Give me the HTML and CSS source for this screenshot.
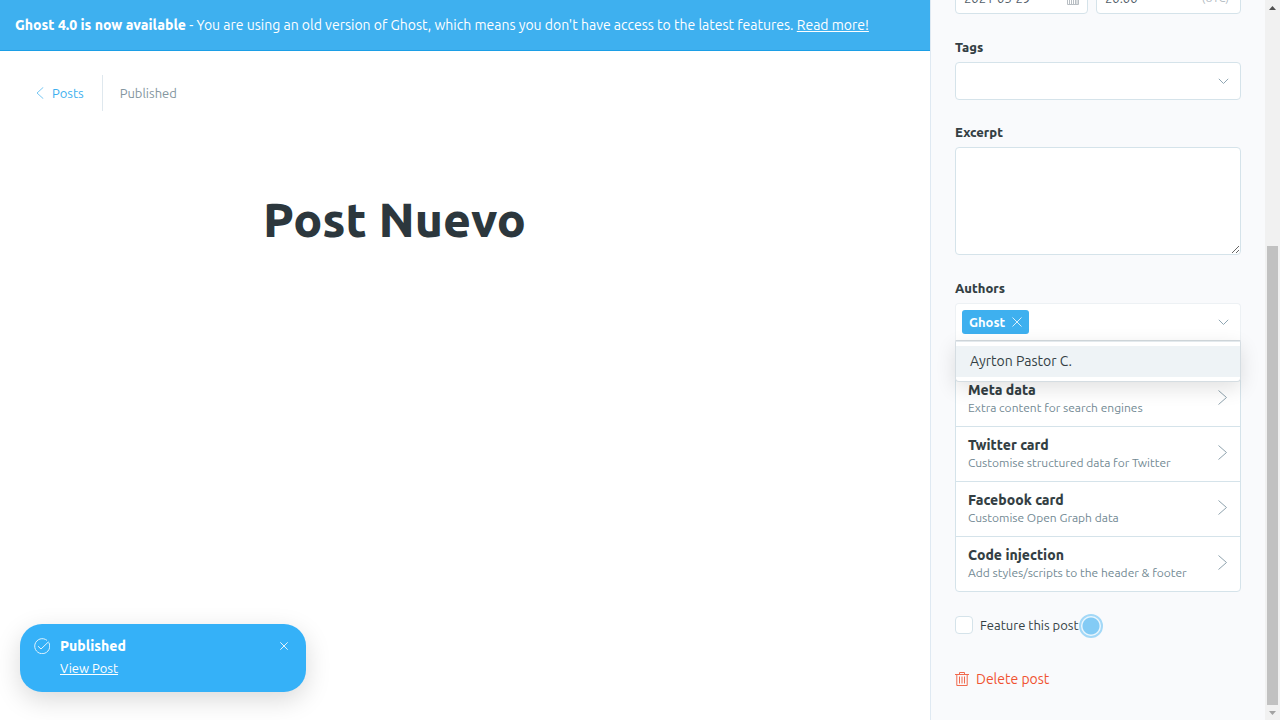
FILE: index.html
```html
<!DOCTYPE html>
<html lang="en">
<head>
<meta charset="utf-8">
<meta name="viewport" content="width=device-width, initial-scale=1">
<title>Post Nuevo - Ghost</title>
<link rel="stylesheet" href="styles.css">
</head>
<body>
<div class="app">
  <main class="editor">
    <aside class="banner"><p><strong>Ghost 4.0 is now available</strong> - You are using an old version of Ghost, which means you don't have access to the latest features. <a href="#">Read more!</a></p></aside>
    <header class="editor-header">
      <a class="back" href="#">
        <svg width="8" height="12" viewBox="0 0 8 12" aria-hidden="true"><path d="M7.3.3 1 6l6.3 5.7"/></svg>
        Posts
      </a>
      <span class="status">Published</span>
    </header>
    <h1 class="post-title">Post Nuevo</h1>

    <section class="toast" role="status">
      <svg class="toast-check" width="16" height="16" viewBox="0 0 16 16" aria-hidden="true"><path d="M14.7 4.4A7.5 7.5 0 1 1 13 2.4"/><path d="M4 8.2 7 11l7.5-7.2"/></svg>
      <div class="toast-body">
        <strong>Published</strong>
        <a href="#">View Post</a>
      </div>
      <button class="toast-close" type="button" aria-label="Close"><svg width="8" height="8" viewBox="0 0 8 8" aria-hidden="true"><path d="M.3.3 7.7 7.7M7.7.3.3 7.7"/></svg></button>
    </section>
  </main>

  <aside class="settings">
    <form class="settings-content">
      <div class="date-row">
        <div class="date-field">
          <input type="text" value="2021-03-29" aria-label="Publish date">
          <svg width="12" height="13" viewBox="0 0 12 13" aria-hidden="true"><path d="M.5 2.5h11v10H.5zM.5 5.5h11M2.5 5.5v7M4.5 5.5v7M6.5 5.5v7M8.5 5.5v7M10 5.5v7M3.5 0v3M8.5 0v3"/></svg>
        </div>
        <div class="time-field">
          <input type="text" value="20:00" aria-label="Publish time">
          <small>(UTC)</small>
        </div>
      </div>

      <div class="field tags">
        <label for="tags">Tags</label>
        <div class="select-box">
          <select id="tags"><option></option></select>
          <svg class="chevron" width="11" height="7" viewBox="0 0 11 7" aria-hidden="true"><path d="M.8.8 5.5 5.5 10.2.8"/></svg>
        </div>
      </div>

      <div class="field">
        <label for="excerpt">Excerpt</label>
        <textarea id="excerpt"></textarea>
      </div>

      <div class="field authors">
        <label for="authors">Authors</label>
        <div class="token-box">
          <span class="token">Ghost <button type="button" aria-label="Remove Ghost"><svg width="10" height="10" viewBox="0 0 10 10" aria-hidden="true"><path d="M.5.5l9 9M9.5.5l-9 9"/></svg></button></span>
          <input id="authors" type="text" role="combobox" aria-expanded="true" aria-controls="author-options">
          <svg class="chevron" width="11" height="7" viewBox="0 0 11 7" aria-hidden="true"><path d="M.8.8 5.5 5.5 10.2.8"/></svg>
        </div>
        <ul class="options" id="author-options" role="listbox">
          <li role="option" aria-selected="true">Ayrton Pastor C.</li>
        </ul>
      </div>

      <nav class="nav-list">
        <button type="button"><span><b>Meta data</b><small>Extra content for search engines</small></span><svg width="9" height="15" viewBox="0 0 9 15" aria-hidden="true"><path d="M.5.5l8 7-8 7"/></svg></button>
        <button type="button"><span><b>Twitter card</b><small>Customise structured data for Twitter</small></span><svg width="9" height="15" viewBox="0 0 9 15" aria-hidden="true"><path d="M.5.5l8 7-8 7"/></svg></button>
        <button type="button"><span><b>Facebook card</b><small>Customise Open Graph data</small></span><svg width="9" height="15" viewBox="0 0 9 15" aria-hidden="true"><path d="M.5.5l8 7-8 7"/></svg></button>
        <button type="button"><span><b>Code injection</b><small>Add styles/scripts to the header &amp; footer</small></span><svg width="9" height="15" viewBox="0 0 9 15" aria-hidden="true"><path d="M.5.5l8 7-8 7"/></svg></button>
      </nav>

      <div class="feature">
        <input id="featured" type="checkbox">
        <label for="featured">Feature this post</label>
        <span class="pulse"></span>
      </div>

      <button class="delete" type="button">
        <svg width="14" height="14" viewBox="0 0 14 14" aria-hidden="true"><path d="M0 2.5h14M4.5 2V.5h5V2M1.8 2.5v11h10.4v-11M4.5 4.5v7M7 4.5v7M9.5 4.5v7"/></svg>
        Delete post
      </button>
    </form>
    <div class="scrollbar" aria-hidden="true">
      <svg width="7" height="4" viewBox="0 0 7 4"><path class="up" d="M0 4 3.5 0 7 4z"/></svg>
      <div class="track"><div class="thumb"></div></div>
      <svg width="7" height="4" viewBox="0 0 7 4"><path class="down" d="M0 0h7L3.5 4z"/></svg>
    </div>
  </aside>
</div>
</body>
</html>
```
FILE: styles.css
```css
* { box-sizing: border-box; }

body {
  margin: 0;
  font-family: Ubuntu, "Noto Sans", "Open Sans", sans-serif;
  font-size: 14px;
  color: #343f44;
  background: #fff;
}

button, input, select, textarea { font: inherit; color: inherit; }
button { border: 0; padding: 0; background: none; cursor: pointer; }
svg { display: block; flex: none; fill: none; stroke: currentColor; }
strong, b { font-weight: 800; }

.app { display: flex; height: 100vh; overflow: hidden; }

/* Editor */
.editor { position: relative; flex: 1; min-width: 0; }

.banner {
  padding: 14px 15px;
  background: #3eb0ef;
  border-bottom: 1px solid #1c9fe6;
  color: #fff;
  line-height: 22px;
}
.banner p { margin: 0; white-space: nowrap; }
.banner a { color: inherit; }

.editor-header {
  display: flex;
  align-items: center;
  padding: 24px 36px;
  font-size: 13px;
  line-height: 36px;
}
.back {
  display: flex;
  align-items: center;
  gap: 8px;
  padding-right: 18px;
  border-right: 1px solid #dfe8ee;
  color: #3eb0ef;
  text-decoration: none;
}
.back svg { opacity: .7; }
.status { padding-left: 17px; color: #8496a0; }

.post-title {
  margin: 52px auto 0;
  padding: 0 15px;
  width: 80%;
  max-width: 434px;
  font-size: 48px;
  font-weight: 800;
  line-height: 64px;
  color: #2c373d;
  white-space: nowrap;
}

/* Notification */
.toast {
  position: absolute;
  left: 20px;
  bottom: 28px;
  display: flex;
  align-items: flex-start;
  width: 286px;
  padding: 12px 18px 12px 14px;
  border-radius: 22px;
  background: #35b1f8;
  color: #fff;
  box-shadow: 0 8px 26px rgba(0, 0, 0, .15);
}
.toast-check { margin: 2px 10px 0 0; }
.toast-check, .toast-close svg { opacity: .85; }
.toast-body { display: grid; flex: 1; gap: 2px; justify-items: start; line-height: 20px; padding-bottom: 2px; }
.toast-body a { color: inherit; font-size: 13px; line-height: 20px; }
.toast-close { padding: 6px 0; }

/* Settings panel */
.settings {
  display: flex;
  width: 350px;
  background: #f9fafc;
  border-left: 1px solid #dfe9f2;
}
.settings-content {
  display: flex;
  flex: 1;
  flex-direction: column;
  justify-content: flex-end;
  min-width: 0;
  padding: 0 24px 31px;
}
.settings-content > * { flex: none; }

.date-row {
  display: grid;
  grid-template-columns: 133fr 145fr;
  gap: 8px;
  margin-bottom: 23px;
  font-size: 13px;
  color: #53606a;
}
.date-field, .time-field {
  display: flex;
  align-items: center;
  height: 32px;
  padding: 0 8px;
  border: 1px solid #d5e3ea;
  border-radius: 4px;
  background: #fff;
}
.time-field { padding-right: 11px; }
.date-row input { flex: 1; width: 0; min-width: 0; padding: 0; border: 0; background: none; outline: 0; }
.date-row svg { color: #b8bec3; }
.date-row small { font-size: 11px; color: #aeb7be; }

.field { display: grid; margin-bottom: 23px; }
.field label { margin-bottom: 5px; font-size: 13px; font-weight: 800; line-height: 20px; }
.tags { margin-bottom: 22px; }
.chevron { color: #8fa6b3; }
.select-box { display: grid; align-items: center; }
.select-box > * { grid-area: 1 / 1; }
.select-box .chevron { justify-self: end; margin-right: 12px; pointer-events: none; }
select, textarea {
  width: 100%;
  border: 1px solid #d5e3ea;
  border-radius: 4px;
  background: #fff;
  outline: 0;
}
select { height: 38px; appearance: none; }
textarea { height: 108px; resize: vertical; }

.authors { position: relative; margin-bottom: 30px; }
.token-box {
  display: flex;
  align-items: center;
  height: 38px;
  padding: 0 11px 0 6px;
  border: 1px solid #edf1f4;
  border-bottom-color: #d3dadf;
  border-radius: 4px 4px 0 0;
  background: #fff;
}
.token {
  display: flex;
  align-items: center;
  gap: 7px;
  height: 24px;
  padding: 0 7px;
  border-radius: 3px;
  background: #3eb0ef;
  color: #fff;
  font-size: 13px;
  font-weight: 600;
}
.token svg { opacity: .8; }
.token-box input { flex: 1; min-width: 0; border: 0; background: none; outline: 0; }
.options {
  position: absolute;
  z-index: 1;
  top: 100%;
  left: 0;
  right: 0;
  margin: 0;
  padding: 4px 0;
  list-style: none;
  border: 1px solid #d5dde2;
  border-top-color: #e3e9ed;
  border-radius: 0 0 4px 4px;
  background: #fff;
  box-shadow: 0 6px 20px rgba(0, 0, 0, .12);
}
.options li { padding: 0 14px; line-height: 31px; background: #eef3f6; }

.nav-list { border: 1px solid #d5e3ea; border-radius: 4px; background: #fff; margin-bottom: 23px; }
.nav-list button {
  display: flex;
  align-items: flex-start;
  justify-content: space-between;
  width: 100%;
  padding: 9px 13px 10px 12px;
  text-align: left;
}
.nav-list button + button { border-top: 1px solid #d5e3ea; }
.nav-list span { display: grid; }
.nav-list b { line-height: 19px; }
.nav-list small { font-size: 12px; line-height: 16px; color: #738a94; white-space: nowrap; }
.nav-list svg { margin-top: 9px; color: #8ea2ad; }

.feature {
  display: flex;
  align-items: center;
  align-self: flex-start;
  position: relative;
  gap: 7px;
  height: 20px;
  margin-bottom: 34px;
  font-size: 13px;
}
.feature input {
  appearance: none;
  width: 18px;
  height: 18px;
  margin: 0;
  border: 1px solid #d5e3ea;
  border-radius: 4px;
  background: #fff;
}
.pulse {
  position: absolute;
  left: 124px;
  top: -1px;
  width: 24px;
  height: 24px;
  border: 2px solid #a3d8f7;
  border-radius: 50%;
  background: radial-gradient(circle, #83cbf5 8px, #eaf6fd 9px) padding-box;
}

.delete {
  display: flex;
  align-items: center;
  align-self: flex-start;
  gap: 7px;
  line-height: 20px;
  color: #f05230;
}
.delete svg { opacity: .85; }

/* Scrollbar */
.scrollbar {
  display: flex;
  flex-direction: column;
  align-items: center;
  flex: none;
  width: 15px;
  padding: 6px 0 5px;
  background: #f1f1f1;
}
.scrollbar svg { stroke: none; }
.up { fill: #505050; }
.down { fill: #a3a3a3; }
.track { display: flex; flex: 1; flex-direction: column; justify-content: flex-end; width: 11px; padding: 5px 0 6px; }
.thumb { height: 66.5%; background: #c1c1c1; }
```
